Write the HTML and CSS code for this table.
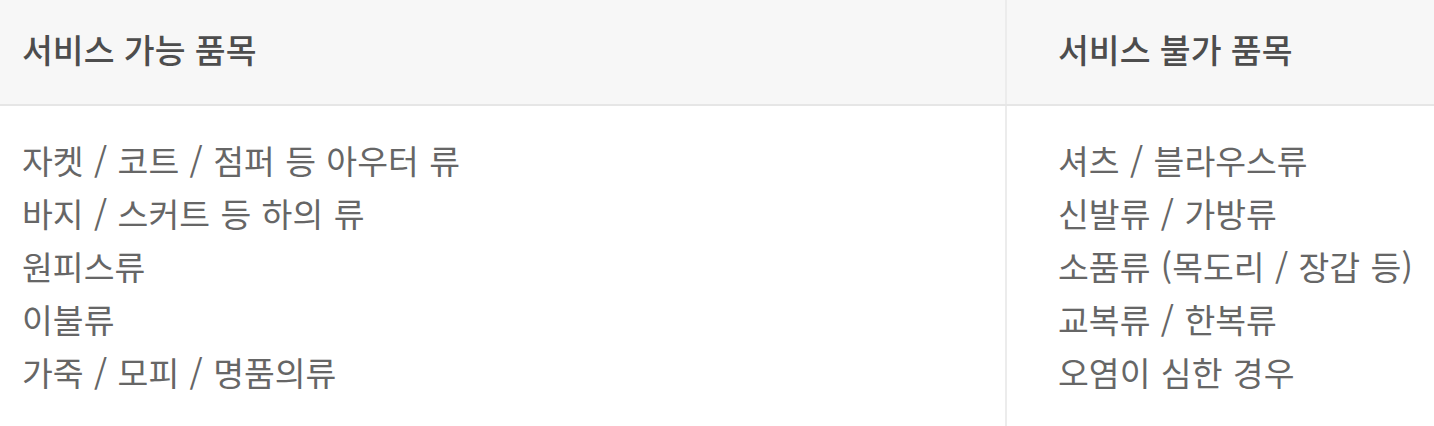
FILE: index.html
```html
<!DOCTYPE html>
<html lang="ko">
<head>
    <meta charset="utf-8">
    <title>서비스 품목</title>
    <link rel="stylesheet" href="styles.css">
</head>
<body>
    <table class="items">
        <thead>
            <tr>
                <th class="col-ok">서비스 가능 품목</th>
                <th class="col-no">서비스 불가 품목</th>
            </tr>
        </thead>
        <tbody>
            <tr>
                <td class="col-ok">
                    <ul class="list">
                        <li>자켓 / 코트 / 점퍼 등 아우터 류</li>
                        <li>바지 / 스커트 등 하의 류</li>
                        <li>원피스류</li>
                        <li>이불류</li>
                        <li>가죽 / 모피 / 명품의류</li>
                    </ul>
                </td>
                <td class="col-no">
                    <ul class="list">
                        <li>셔츠 / 블라우스류</li>
                        <li>신발류 / 가방류</li>
                        <li>소품류 (목도리 / 장갑 등)</li>
                        <li>교복류 / 한복류</li>
                        <li>오염이 심한 경우</li>
                    </ul>
                </td>
            </tr>
        </tbody>
    </table>
</body>
</html>
```

FILE: styles.css
```css
body {
    margin: 0;
    background: #fff;
    font-family: "Noto Sans CJK KR", "Noto Sans", sans-serif;
}

.items {
    width: 100%;
    border-collapse: collapse;
    table-layout: fixed;
}

.items th {
    height: 96px;
    padding: 0 0 8px;
    background: #f7f7f7;
    border-bottom: 2px solid #e6e6e6;
    color: #4d4d4d;
    font-size: 33.5px;
    font-weight: 500;
    text-align: left;
    vertical-align: middle;
}

.items td {
    padding: 27px 0 60px;
    vertical-align: top;
    color: #666;
    font-size: 33.5px;
    word-spacing: 1px;
}

.col-ok {
    width: 1006px;
    padding-left: 22px !important;
    box-sizing: border-box;
}

.col-no {
    padding-left: 51px !important;
    border-left: 2px solid #ececec;
}

.list {
    margin: 0;
    padding: 0;
    list-style: none;
}

.list li {
    line-height: 53px;
}
```
